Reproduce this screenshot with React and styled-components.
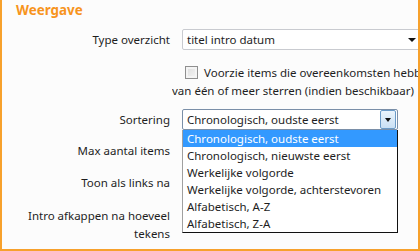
import React from "react";
import styled, { createGlobalStyle } from "styled-components";

const Global = createGlobalStyle`
  html, body { margin: 0; padding: 0; background: #fcfcfc; }
  body { font-family: "Noto Sans", "Open Sans", sans-serif; font-size: 11.5px; color: #1e1e1e; }
`;

const Panel = styled.div`
  width: 420px;
  height: 251px;
  box-sizing: border-box;
  border: 2px solid #f7a12c;
  border-top: none;
  background: #fcfcfc;
  overflow: hidden;
`;

const Heading = styled.div`
  font-weight: bold;
  font-size: 13.4px;
  color: #f7941d;
  padding: 1px 0 0 14px;
  height: 22px;
  line-height: 18px;
`;

const Row = styled.div`
  display: grid;
  grid-template-columns: 168px 1fr;
  column-gap: 2px;
  align-items: ${(p) => p.$align || "center"};
  padding: ${(p) => p.$pad || "5px 0"};
  min-height: ${(p) => p.$h || "auto"};
  box-sizing: border-box;
`;

const Label = styled.div`
  text-align: right;
  line-height: 18px;
`;

const Field = styled.div`
  position: relative;
  padding-left: ${(p) => p.$indent || "10px"};
  line-height: 18px;
  min-width: 0;
`;

const SelectBox = styled.div`
  position: relative;
  height: 21px;
  width: ${(p) => p.$w};
  box-sizing: border-box;
  border: 1px solid ${(p) => (p.$open ? "#7a8fa8" : "#c9cbd0")};
  border-radius: 2px;
  background: #fff;
  padding: 0 0 0 4px;
  line-height: 19px;
  white-space: nowrap;
  display: flex;
  align-items: center;
`;

const Arrow = styled.span`
  position: absolute;
  right: ${(p) => p.$right};
  top: 8px;
  width: 0;
  height: 0;
  border-left: 4px solid transparent;
  border-right: 4px solid transparent;
  border-top: 4px solid #111;
`;

const DropButton = styled.span`
  position: absolute;
  right: 1px;
  top: 0;
  width: 16px;
  height: 19px;
  box-sizing: border-box;
  border: 1px solid #6b9bc8;
  border-radius: 2px;
  background: linear-gradient(#eaf4fc, #c9e0f5);
`;

const DropArrow = styled.span`
  position: absolute;
  left: 4px;
  top: 7px;
  width: 0;
  height: 0;
  border-left: 3.5px solid transparent;
  border-right: 3.5px solid transparent;
  border-top: 4px solid #111;
`;

const List = styled.ul`
  position: absolute;
  left: 10px;
  top: 21px;
  width: 216px;
  margin: 0;
  padding: 0;
  list-style: none;
  background: #fff;
  border: 1px solid #111;
  border-left-color: #a0a0a0;
  border-top: none;
  box-sizing: border-box;
  z-index: 5;
`;

const Item = styled.li`
  height: 17px;
  line-height: 17px;
  padding-left: 4px;
  white-space: nowrap;
  background: ${(p) => (p.$active ? "#3399ff" : "transparent")};
  color: ${(p) => (p.$active ? "#fff" : "#1e1e1e")};
`;

const Check = styled.span`
  display: inline-block;
  vertical-align: -2px;
  width: 13px;
  height: 13px;
  box-sizing: border-box;
  border: 1px solid #8f8f8f;
  background: linear-gradient(135deg, #dcdcdc, #f6f6f6);
  box-shadow: inset 0 0 0 2px #f4f4f4;
  margin: 0 6px 0 13px;
`;

const CheckText = styled.div`
  white-space: nowrap;
  overflow: hidden;
`;

const options = [
  "Chronologisch, oudste eerst",
  "Chronologisch, nieuwste eerst",
  "Werkelijke volgorde",
  "Werkelijke volgorde, achterstevoren",
  "Alfabetisch, A-Z",
  "Alfabetisch, Z-A",
];

export default function App() {
  return (
    <>
      <Global />
      <Panel>
        <Heading>Weergave</Heading>
        <Row $pad="6px 0 6px">
          <Label>Type overzicht</Label>
          <Field>
            <SelectBox $w="250px">
              titel intro datum
              <Arrow $right="15px" />
            </SelectBox>
          </Field>
        </Row>
        <Row $pad="8px 0 4px" $align="start">
          <span />
          <Field $indent="0px">
            <CheckText>
              <Check />
              Voorzie items die overeenkomsten hebben
            </CheckText>
            <CheckText>van één of meer sterren (indien beschikbaar)</CheckText>
          </Field>
        </Row>
        <Row $pad="5px 0 5px">
          <Label>Sortering</Label>
          <Field>
            <SelectBox $w="216px" $open>
              Chronologisch, oudste eerst
              <DropButton>
                <DropArrow />
              </DropButton>
            </SelectBox>
            <List>
              {options.map((o, i) => (
                <Item key={o} $active={i === 0}>
                  {o}
                </Item>
              ))}
            </List>
          </Field>
        </Row>
        <Row $h="32px" $pad="0">
          <Label>Max aantal items</Label>
          <Field />
        </Row>
        <Row $h="32px" $pad="0">
          <Label>Toon als links na</Label>
          <Field />
        </Row>
        <Row $pad="8px 0 0">
          <Label>
            Intro afkappen na hoeveel
            <br />
            tekens
          </Label>
          <Field />
        </Row>
      </Panel>
    </>
  );
}
